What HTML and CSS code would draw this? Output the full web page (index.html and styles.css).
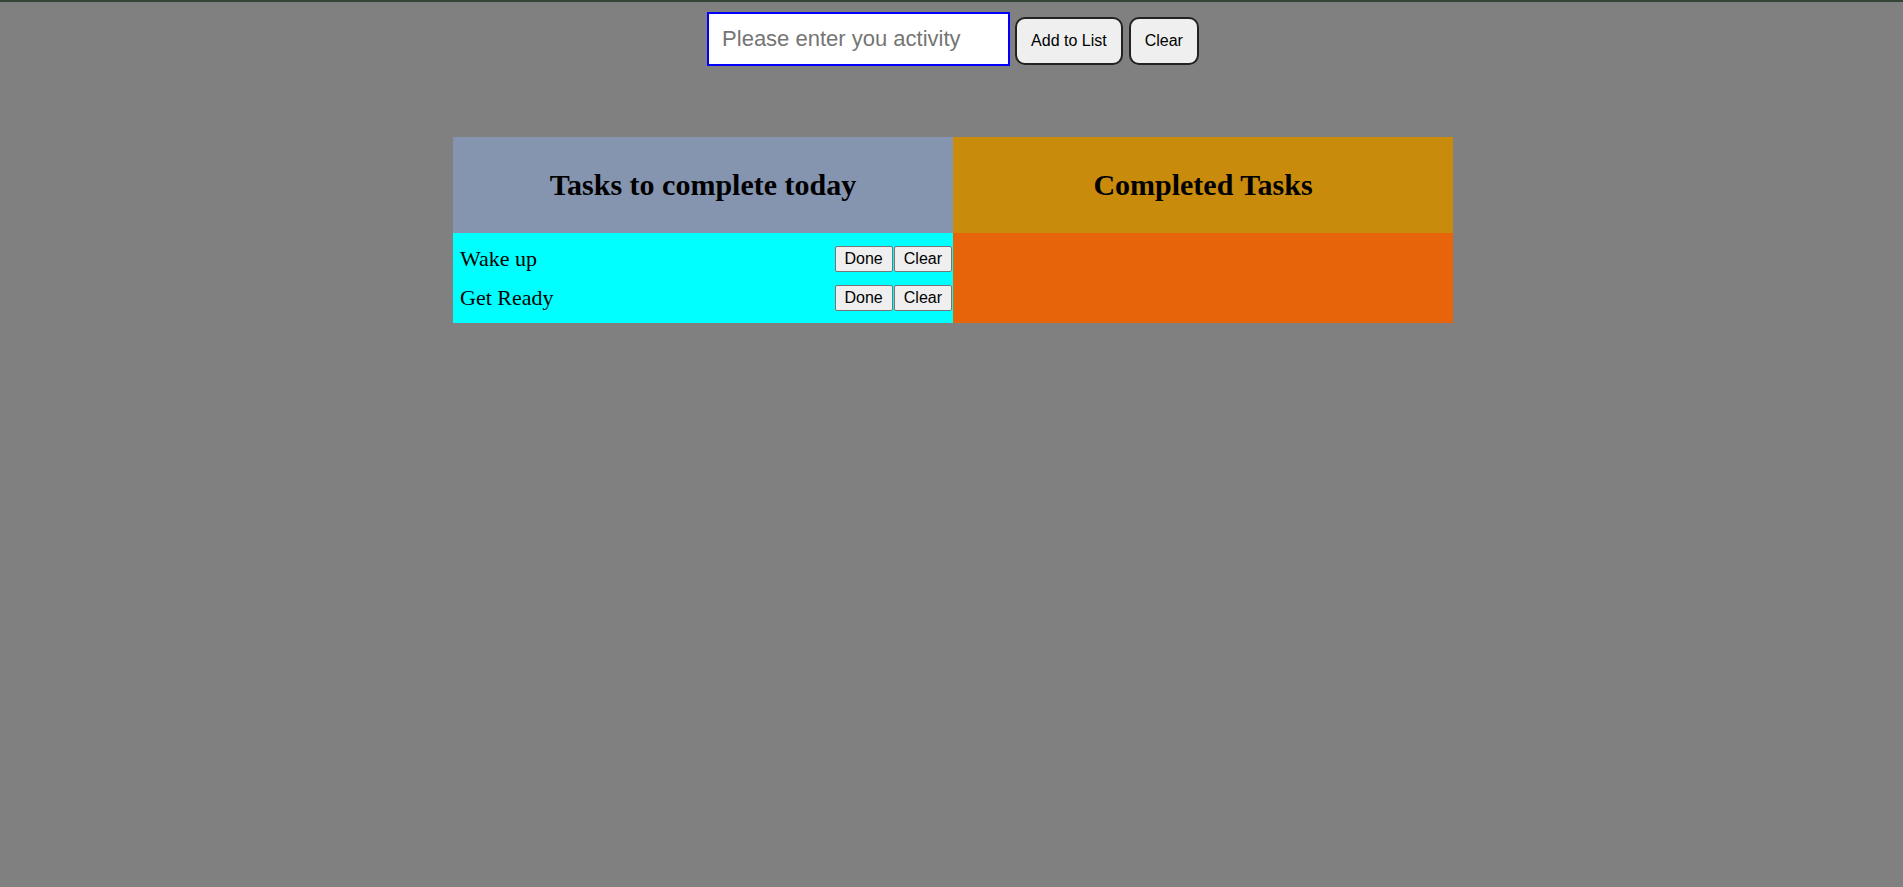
FILE: index.html
```html
<!DOCTYPE html>
<html lang="en">
<head>
<meta charset="utf-8">
<title>To Do List</title>
<link rel="stylesheet" href="styles.css">
</head>
<body>
<div class="controls">
  <input class="activity" type="text" placeholder="Please enter you activity">
  <button class="top-btn">Add to List</button>
  <button class="top-btn">Clear</button>
</div>
<div class="board">
  <div class="column">
    <h2 class="head head-todo">Tasks to complete today</h2>
    <div class="body body-todo">
      <div class="task">
        <span class="task-name">Wake up</span>
        <span class="task-actions"><button class="small-btn">Done</button><button class="small-btn">Clear</button></span>
      </div>
      <div class="task">
        <span class="task-name">Get Ready</span>
        <span class="task-actions"><button class="small-btn">Done</button><button class="small-btn">Clear</button></span>
      </div>
    </div>
  </div>
  <div class="column">
    <h2 class="head head-done">Completed Tasks</h2>
    <div class="body body-done"></div>
  </div>
</div>
</body>
</html>
```

FILE: styles.css
```css
html, body {
  margin: 0;
  padding: 0;
}
body {
  background: #808080;
  border-top: 2px solid #354535;
  min-height: 885px;
  font-family: "Liberation Serif", "Times New Roman", serif;
}
.controls {
  display: flex;
  justify-content: center;
  align-items: baseline;
  gap: 5px;
  padding-top: 10px;
  padding-left: 3px;
}
.activity {
  box-sizing: border-box;
  width: 303px;
  height: 54px;
  border: 2px solid #0000ff;
  outline: none;
  background: #fff;
  padding: 0 13px;
  font-family: "Liberation Sans", Arial, sans-serif;
  font-size: 22px;
  color: #000;
}
.activity::placeholder {
  color: #757575;
}
.top-btn {
  box-sizing: border-box;
  height: 48px;
  padding: 0 14px;
  border: 2px solid #222;
  border-radius: 10px;
  background: #efefef;
  font-family: "Liberation Sans", Arial, sans-serif;
  font-size: 16px;
  color: #000;
}
.top-btn + .top-btn {
  margin-left: 1px;
}
.board {
  display: grid;
  grid-template-columns: 500px 500px;
  width: 1000px;
  margin: 71px auto 0;
  padding-left: 3px;
}
.column {
  display: flex;
  flex-direction: column;
}
.head {
  margin: 0;
  height: 96px;
  display: flex;
  align-items: center;
  justify-content: center;
  font-size: 30px;
  font-weight: bold;
  color: #000;
}
.head-todo { background: #8594af; }
.head-done { background: #c98b0c; }
.body {
  height: 90px;
  box-sizing: border-box;
  padding: 13px 1px 12px 7px;
  display: flex;
  flex-direction: column;
  gap: 13px;
}
.body-todo { background: #00ffff; }
.body-done { background: #e8640b; }
.task {
  display: flex;
  justify-content: space-between;
  align-items: center;
  height: 26px;
}
.task-name {
  font-size: 22px;
  color: #000;
}
.task-actions {
  display: flex;
  gap: 1px;
}
.small-btn {
  box-sizing: border-box;
  height: 26px;
  padding: 0 9px;
  border: 1px solid #767676;
  border-radius: 2px;
  background: #efefef;
  font-family: "Liberation Sans", Arial, sans-serif;
  font-size: 16px;
  color: #000;
}
```
